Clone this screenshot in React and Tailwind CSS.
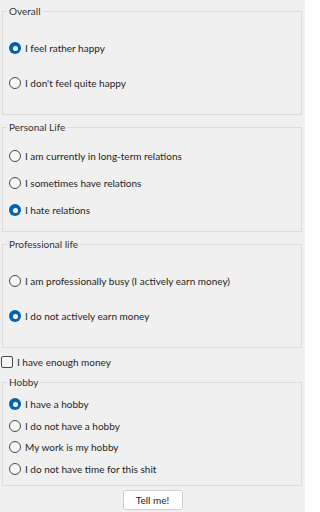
import React from "react";

const Radio = ({ checked, label }) => (
  <div className="flex items-center h-4 gap-[4px]">
    {checked ? (
      <span className="w-[12px] h-[12px] rounded-full bg-[#0063b1] flex items-center justify-center shrink-0">
        <span className="w-[5px] h-[5px] rounded-full bg-white" />
      </span>
    ) : (
      <span className="w-[12px] h-[12px] rounded-full border border-[#4a4a4a] bg-[#f7f7f7] shrink-0" />
    )}
    <span className="leading-4">{label}</span>
  </div>
);

const Group = ({ title, items, className }) => (
  <fieldset className={`ml-[2px] w-[300px] border border-[#dcdcdc] ${className}`}>
    <legend className="ml-[4px] px-[2px] h-4 leading-4 text-[#333333]">{title}</legend>
    {items}
  </fieldset>
);

export default function App() {
  return (
    <div
      className="w-[305px] h-[512px] bg-[#f0f0f0] text-[10px] text-[#1f1f1f] flex flex-col overflow-hidden"
      style={{ fontFamily: 'Lato, "Noto Sans", sans-serif' }}
    >
      <Group
        title="Overall"
        className="mt-[3px] h-[112px]"
        items={
          <div className="flex flex-col pl-[6px] pt-[21px] gap-[19px]">
            <Radio checked label="I feel rather happy" />
            <Radio label="I don't feel quite happy" />
          </div>
        }
      />
      <Group
        title="Personal Life"
        className="mt-[4px] h-[113px]"
        items={
          <div className="flex flex-col pl-[6px] pt-[13px] gap-[11px]">
            <Radio label="I am currently in long-term relations" />
            <Radio label="I sometimes have relations" />
            <Radio checked label="I hate relations" />
          </div>
        }
      />
      <Group
        title="Professional life"
        className="mt-[4px] h-[112px]"
        items={
          <div className="flex flex-col pl-[6px] pt-[21px] gap-[19px]">
            <Radio label="I am professionally busy (I actively earn money)" />
            <Radio checked label="I do not actively earn money" />
          </div>
        }
      />
      <label className="mt-[6px] ml-[1px] flex items-center h-4 gap-[4px]">
        <span className="w-[12px] h-[12px] border border-[#4a4a4a] bg-[#f7f7f7] rounded-[2px] shrink-0" />
        <span className="leading-4">I have enough money</span>
      </label>
      <Group
        title="Hobby"
        className="mt-[4px] h-[112px]"
        items={
          <div className="flex flex-col pl-[6px] pt-[6px] gap-[5.5px]">
            <Radio checked label="I have a hobby" />
            <Radio label="I do not have a hobby" />
            <Radio label="My work is my hobby" />
            <Radio label="I do not have time for this shit" />
          </div>
        }
      />
      <div className="mt-[4px] flex justify-center">
        <button className="w-[60px] h-[20px] bg-white border border-[#d0d0d0] rounded-[2px] text-[10px] leading-4 text-[#1f1f1f]">
          Tell me!
        </button>
      </div>
    </div>
  );
}
